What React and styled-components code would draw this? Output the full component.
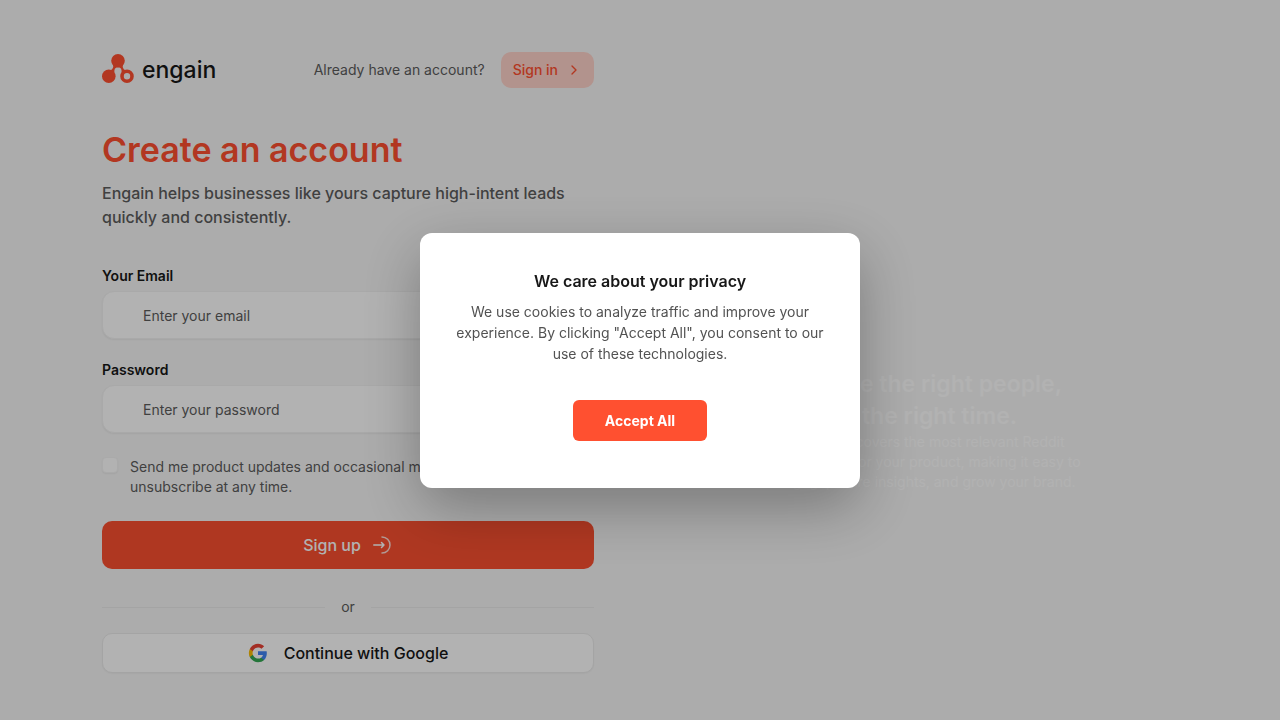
import React, { useState } from "react";
import styled, { createGlobalStyle } from "styled-components";
import { FiChevronRight } from "react-icons/fi";

const App = () => {
  const [open, setOpen] = useState(true);

  return (
    <>
      <GlobalStyle />
      <Page>
        <FormSide>
          <Header>
            <Brand href="#">
              <LogoMark />
              <span>engain</span>
            </Brand>
            <HeaderRight>
              <span>Already have an account?</span>
              <SignIn href="#">
                Sign in
                <FiChevronRight size={16} />
              </SignIn>
            </HeaderRight>
          </Header>

          <Heading>Create an account</Heading>
          <SubHeading>
            Engain helps businesses like yours capture high-intent leads quickly
            and consistently.
          </SubHeading>

          <Form onSubmit={(e) => e.preventDefault()}>
            <Field>
              <Label htmlFor="email">Your Email</Label>
              <Input id="email" type="email" placeholder="Enter your email" />
            </Field>
            <Field>
              <Label htmlFor="password">Password</Label>
              <Input
                id="password"
                type="password"
                placeholder="Enter your password"
              />
            </Field>
            <CheckRow>
              <Checkbox id="updates" type="checkbox" />
              <label htmlFor="updates">
                Send me product updates and occasional marketing emails. I can
                unsubscribe at any time.
              </label>
            </CheckRow>
            <SubmitButton type="submit">
              Sign up
              <EnterIcon />
            </SubmitButton>
          </Form>

          <Divider>
            <span>or</span>
          </Divider>
          <GoogleButton type="button">
            <GoogleIcon />
            Continue with Google
          </GoogleButton>
        </FormSide>

        <Promo>
          <PromoTitle>
            Engage the right people,
            <br />
            at the right time.
          </PromoTitle>
          <PromoText>
            Engain discovers the most relevant Reddit discussions for your
            product, making it easy to engage, share insights, and grow your
            brand.
          </PromoText>
        </Promo>
      </Page>

      {open && (
        <Overlay>
          <Modal role="dialog" aria-modal="true" aria-labelledby="privacy">
            <ModalTitle id="privacy">We care about your privacy</ModalTitle>
            <ModalText>
              We use cookies to analyze traffic and improve your experience. By
              clicking "Accept All", you consent to our use of these
              technologies.
            </ModalText>
            <AcceptButton type="button" onClick={() => setOpen(false)}>
              Accept All
            </AcceptButton>
          </Modal>
        </Overlay>
      )}
    </>
  );
};

const LogoMark = () => (
  <svg width="32" height="32" viewBox="0 0 32 32" aria-hidden="true">
    <g fill="#ff5030">
      <circle cx="16" cy="6.8" r="6.8" />
      <circle cx="6.8" cy="22.2" r="6.8" />
      <path d="M10.5 10 C12 12 11.2 15 8.5 16.5 L12.5 19 C12 15.5 13 13.2 16 13.2 C19 13.2 20 15.5 19.5 19 L23.5 16.5 C20.8 15 20 12 21.5 10 Z" />
    </g>
    <circle cx="25" cy="22.2" r="5" fill="none" stroke="#ff5030" strokeWidth="3.6" />
  </svg>
);

const EnterIcon = () => (
  <svg
    width="20"
    height="20"
    viewBox="2 0 20 20"
    fill="none"
    stroke="currentColor"
    strokeWidth="1.5"
    strokeLinecap="round"
    strokeLinejoin="round"
    aria-hidden="true"
  >
    <path d="M11 2 A8 8 0 0 1 11 18" strokeOpacity="0.8" />
    <path d="M2.8 10 H13 M10.5 7.5 L13 10 L10.5 12.5" />
  </svg>
);

const GoogleIcon = () => (
  <svg width="20" height="20" viewBox="0 0 24 24" aria-hidden="true">
    <path
      fill="#4285F4"
      d="M22.56 12.25c0-.78-.07-1.53-.2-2.25H12v4.26h5.92c-.26 1.37-1.04 2.53-2.21 3.31v2.77h3.57c2.08-1.92 3.28-4.74 3.28-8.09z"
    />
    <path
      fill="#34A853"
      d="M12 23c2.97 0 5.46-.98 7.28-2.66l-3.57-2.77c-.98.66-2.23 1.06-3.71 1.06-2.86 0-5.29-1.93-6.16-4.53H2.18v2.84C3.99 20.53 7.7 23 12 23z"
    />
    <path
      fill="#FBBC05"
      d="M5.84 14.09c-.22-.66-.35-1.36-.35-2.09s.13-1.43.35-2.09V7.07H2.18C1.43 8.55 1 10.22 1 12s.43 3.45 1.18 4.93l3.66-2.84z"
    />
    <path
      fill="#EA4335"
      d="M12 5.38c1.62 0 3.06.56 4.21 1.64l3.15-3.15C17.45 2.09 14.97 1 12 1 7.7 1 3.99 3.47 2.18 7.07l3.66 2.84c.87-2.6 3.3-4.53 6.16-4.53z"
    />
  </svg>
);

export default App;

const GlobalStyle = createGlobalStyle`
  * {
    box-sizing: border-box;
  }

  body {
    margin: 0;
    background-color: #f7f7f7;
    color: #171717;
    font-family: Inter, "Liberation Sans", sans-serif;
    font-size: 14px;
    line-height: 20px;
  }

  button,
  input {
    font-family: inherit;
  }
`;

const Page = styled.main`
  display: flex;
  min-height: 100vh;
  padding-left: 102px;
`;

const FormSide = styled.section`
  width: 42%;
  max-width: 492px;
  min-width: 320px;
  padding: 52px 0 40px;
`;

const Header = styled.header`
  display: flex;
  align-items: center;
  justify-content: space-between;
`;

const Brand = styled.a`
  display: flex;
  align-items: center;
  gap: 8px;
  color: #171717;
  font-size: 23px;
  font-weight: 500;
  text-decoration: none;
`;

const HeaderRight = styled.div`
  display: flex;
  align-items: center;
  gap: 16px;
  color: #5c5c5c;
`;

const SignIn = styled.a`
  display: flex;
  align-items: center;
  gap: 8px;
  height: 36px;
  padding: 0 12px;
  border-radius: 10px;
  background-color: #ffd3ca;
  color: #ff5030;
  font-weight: 500;
  text-decoration: none;
`;

const Heading = styled.h1`
  margin: 38px 0 7px;
  color: #ff5030;
  font-size: 34px;
  font-weight: 600;
  line-height: 48px;
`;

const SubHeading = styled.p`
  margin: 0;
  color: #5c5c5c;
  font-size: 16px;
  font-weight: 500;
  line-height: 24px;
`;

const Form = styled.form`
  display: flex;
  flex-direction: column;
  gap: 21px;
  margin-top: 37px;
`;

const Field = styled.div`
  display: flex;
  flex-direction: column;
  gap: 5px;
`;

const Label = styled.label`
  font-weight: 600;
`;

const Input = styled.input`
  width: 100%;
  height: 48px;
  padding: 0 40px;
  border: 1px solid #f2f2f2;
  border-radius: 12px;
  outline: none;
  background-color: white;
  box-shadow: 0 1px 2px rgba(0, 0, 0, 0.06);
  color: #171717;
  font-size: 14px;

  &::placeholder {
    color: #5c5c5c;
    opacity: 1;
  }
`;

const CheckRow = styled.div`
  display: flex;
  gap: 12px;
  margin-top: 3px;
  color: #5c5c5c;
`;

const Checkbox = styled.input`
  appearance: none;
  flex: none;
  width: 16px;
  height: 16px;
  margin: 0;
  border: 1px solid #f4f4f4;
  border-radius: 4px;
  background-color: white;
  box-shadow: 0 1px 2px rgba(0, 0, 0, 0.06);

  &:checked {
    background-color: #ff5030;
  }
`;

const SubmitButton = styled.button`
  display: flex;
  align-items: center;
  justify-content: center;
  gap: 12px;
  height: 48px;
  margin-top: 3px;
  border: none;
  border-radius: 10px;
  background-color: #fb5030;
  color: white;
  font-size: 16px;
  font-weight: 500;
  cursor: pointer;
`;

const Divider = styled.div`
  display: flex;
  align-items: center;
  gap: 16px;
  margin: 28px 0 16px;
  color: #5c5c5c;

  &::before,
  &::after {
    content: "";
    flex: 1;
    height: 1px;
    background-color: #ebebeb;
  }
`;

const GoogleButton = styled.button`
  display: flex;
  align-items: center;
  justify-content: center;
  gap: 16px;
  width: 100%;
  height: 40px;
  border: 1px solid #ebebeb;
  border-radius: 10px;
  background-color: white;
  box-shadow: 0 1px 2px rgba(0, 0, 0, 0.04);
  color: #171717;
  font-size: 16px;
  font-weight: 500;
  cursor: pointer;
`;

const Promo = styled.section`
  display: flex;
  flex: 1;
  flex-direction: column;
  align-items: center;
  max-width: 460px;
  margin-left: 102px;
  padding-top: 368px;
  text-align: center;
`;

const PromoTitle = styled.h2`
  margin: 0;
  color: white;
  font-size: 23px;
  font-weight: 600;
  line-height: 32px;
`;

const PromoText = styled.p`
  max-width: 320px;
  margin: 0;
  color: white;
`;

const Overlay = styled.div`
  position: fixed;
  inset: 0;
  display: flex;
  align-items: center;
  justify-content: center;
  background-color: rgba(0, 0, 0, 0.3);
`;

const Modal = styled.div`
  display: flex;
  flex-direction: column;
  align-items: center;
  width: 90%;
  max-width: 440px;
  padding: 36px 36px 47px;
  border-radius: 12px;
  background-color: white;
  box-shadow: 0 20px 60px rgba(0, 0, 0, 0.3);
  text-align: center;
`;

const ModalTitle = styled.h3`
  margin: 0 0 8px;
  font-size: 16px;
  font-weight: 600;
  line-height: 24px;
`;

const ModalText = styled.p`
  margin: 0;
  color: #525252;
  line-height: 21px;
`;

const AcceptButton = styled.button`
  height: 41px;
  margin-top: 36px;
  padding: 0 32px;
  border: none;
  border-radius: 6px;
  background-color: #ff5030;
  color: white;
  font-size: 14px;
  font-weight: 700;
  cursor: pointer;
`;
